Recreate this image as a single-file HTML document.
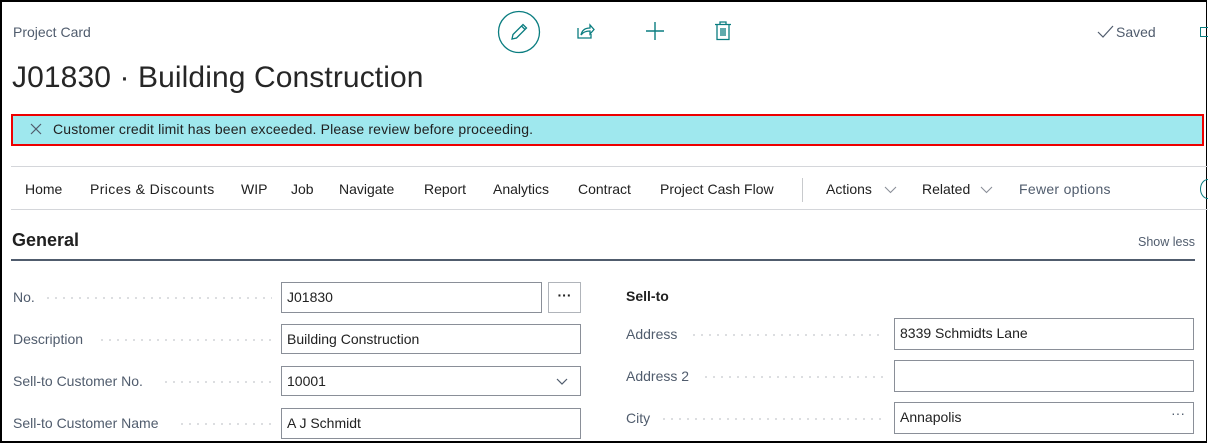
<!DOCTYPE html>
<html><head><meta charset="utf-8"><style>
*{margin:0;padding:0;box-sizing:border-box}
body{width:1208px;height:443px;overflow:hidden;background:#fff;font-family:"Liberation Sans",sans-serif;color:#212121;position:relative}
.frame{position:absolute;left:0;top:0;width:1207px;height:443px;border:2px solid #000;border-right-width:1px}
.a{position:absolute;white-space:nowrap}
.nav{font-size:14px;color:#212121;top:181px}
.lbl{font-size:14px;color:#505c6d}
.dots{position:absolute;height:2px;background-image:radial-gradient(circle,#c4c7cc 0.7px,transparent 1px);background-size:8px 2px}
.box{position:absolute;border:1px solid #8a8f98;background:#fff;font-size:14px;color:#212121;padding-left:5px;line-height:29px}
</style></head><body>
<div class="frame"></div>
<div class="a" style="left:13px;top:24px;font-size:14px;color:#505c6d">Project Card</div>
<div class="a" style="left:12px;top:61px;font-size:30px;color:#262626;letter-spacing:0.1px">J01830 · Building Construction</div>
<svg class="a" style="left:497px;top:10px" width="44" height="44"><circle cx="22" cy="22" r="20.5" fill="none" stroke="#0a7d80" stroke-width="1.3"/><path d="M15 29 L16 24.5 L26 14.5 L29.5 18 L19.5 28 Z M24.5 16 L28 19.5" fill="none" stroke="#0a7d80" stroke-width="1.3"/></svg>
<svg class="a" style="left:576px;top:21px" width="20" height="20"><path d="M2 7 V17 H15 V13" fill="none" stroke="#0a7d80" stroke-width="1.3"/><path d="M5 14 C6 9 9 7 14 7 V4 L18 8.5 L14 13 V10 C10 10 7 11 5 14Z" fill="none" stroke="#0a7d80" stroke-width="1.3"/></svg>
<svg class="a" style="left:645px;top:21px" width="20" height="20"><path d="M10 1 V19 M1 10 H19" stroke="#0a7d80" stroke-width="1.4"/></svg>
<svg class="a" style="left:714px;top:21px" width="18" height="20"><path d="M1 3.5 H17 M6 3.5 V1 H12 V3.5 M3 3.5 V18.5 H15 V3.5 M7 7 V15 M9 7 V15 M11 7 V15" fill="none" stroke="#0a7d80" stroke-width="1.3"/></svg>
<svg class="a" style="left:1097px;top:25px" width="18" height="14"><path d="M1 7 L6 12 L16 1" fill="none" stroke="#505c6d" stroke-width="1.2"/></svg>
<div class="a" style="left:1116px;top:24px;font-size:14px;color:#505c6d">Saved</div>
<div class="a" style="left:1200px;top:27px;width:8px;height:10px;border:1.5px solid #0a7d80;border-right:none"></div>
<div class="a" style="left:11px;top:114px;width:1193px;height:32px;background:#9fe8ee;border:2px solid #ee0000"></div>
<svg class="a" style="left:30px;top:123px" width="12" height="12"><path d="M1 1 L11 11 M11 1 L1 11" stroke="#505c6d" stroke-width="1.2"/></svg>
<div class="a" style="left:53px;top:121px;font-size:14px;color:#212121;letter-spacing:0.15px">Customer credit limit has been exceeded. Please review before proceeding.</div>
<div class="a" style="left:11px;top:166px;width:1197px;height:1px;background:#d4d6da"></div>
<div class="a" style="left:11px;top:209px;width:1197px;height:1px;background:#d4d6da"></div>
<div class="a nav" style="left:25px">Home</div>
<div class="a nav" style="left:90px;letter-spacing:0.4px">Prices &amp; Discounts</div>
<div class="a nav" style="left:241px">WIP</div>
<div class="a nav" style="left:291px">Job</div>
<div class="a nav" style="left:339px">Navigate</div>
<div class="a nav" style="left:424px">Report</div>
<div class="a nav" style="left:493px">Analytics</div>
<div class="a nav" style="left:578px">Contract</div>
<div class="a nav" style="left:660px">Project Cash Flow</div>
<div class="a" style="left:802px;top:178px;width:1px;height:24px;background:#c8cacd"></div>
<div class="a nav" style="left:826px">Actions</div>
<svg class="a" style="left:884px;top:186px" width="13" height="8"><path d="M1 1 L6.5 6.5 L12 1" fill="none" stroke="#8a8f98" stroke-width="1.1"/></svg>
<div class="a nav" style="left:922px">Related</div>
<svg class="a" style="left:980px;top:186px" width="13" height="8"><path d="M1 1 L6.5 6.5 L12 1" fill="none" stroke="#8a8f98" stroke-width="1.1"/></svg>
<div class="a nav" style="left:1019px;color:#505c6d;letter-spacing:0.3px">Fewer options</div>
<div class="a" style="left:1200px;top:179px;width:16px;height:20px;border:1.5px solid #0a7d80;border-radius:50%"></div>
<div class="a" style="left:12px;top:230px;font-size:18px;font-weight:bold;color:#212121">General</div>
<div class="a" style="left:1138px;top:235px;font-size:12.5px;color:#505c6d">Show less</div>
<div class="a" style="left:11px;top:259px;width:1184px;height:2px;background:#505c6d"></div>

<div class="a lbl" style="left:13px;top:289px">No.</div><div class="dots" style="left:44px;top:297px;width:228px"></div>
<div class="box" style="left:281px;top:282px;width:261px;height:31px">J01830</div>
<div class="box" style="left:548px;top:282px;width:33px;height:31px;border-color:#b0b4ba;text-align:center;padding:0;line-height:24px;font-weight:bold">···</div>
<div class="a lbl" style="left:13px;top:331px">Description</div><div class="dots" style="left:98px;top:339px;width:174px"></div>
<div class="box" style="left:281px;top:324px;width:300px;height:30px">Building Construction</div>
<div class="a lbl" style="left:13px;top:373px">Sell-to Customer No.</div><div class="dots" style="left:162px;top:381px;width:110px"></div>
<div class="box" style="left:281px;top:366px;width:300px;height:30px">10001<svg style="position:absolute;right:12px;top:11px" width="12" height="8"><path d="M1 1 L6 6 L11 1" fill="none" stroke="#505c6d" stroke-width="1.2"/></svg></div>
<div class="a lbl" style="left:13px;top:415px">Sell-to Customer Name</div><div class="dots" style="left:178px;top:423px;width:94px"></div>
<div class="box" style="left:281px;top:408px;width:300px;height:31px">A J Schmidt</div>

<div class="a" style="left:626px;top:288px;font-size:14px;font-weight:bold;color:#212121">Sell-to</div>
<div class="a lbl" style="left:626px;top:326px">Address</div><div class="dots" style="left:690px;top:334px;width:195px"></div>
<div class="box" style="left:894px;top:318px;width:300px;height:32px">8339 Schmidts Lane</div>
<div class="a lbl" style="left:626px;top:368px">Address 2</div><div class="dots" style="left:702px;top:376px;width:183px"></div>
<div class="box" style="left:894px;top:360px;width:300px;height:32px"></div>
<div class="a lbl" style="left:626px;top:410px">City</div><div class="dots" style="left:660px;top:418px;width:225px"></div>
<div class="box" style="left:894px;top:402px;width:300px;height:32px">Annapolis<span style="position:absolute;right:8px;top:-4px;color:#505c6d">···</span></div>
</body></html>
